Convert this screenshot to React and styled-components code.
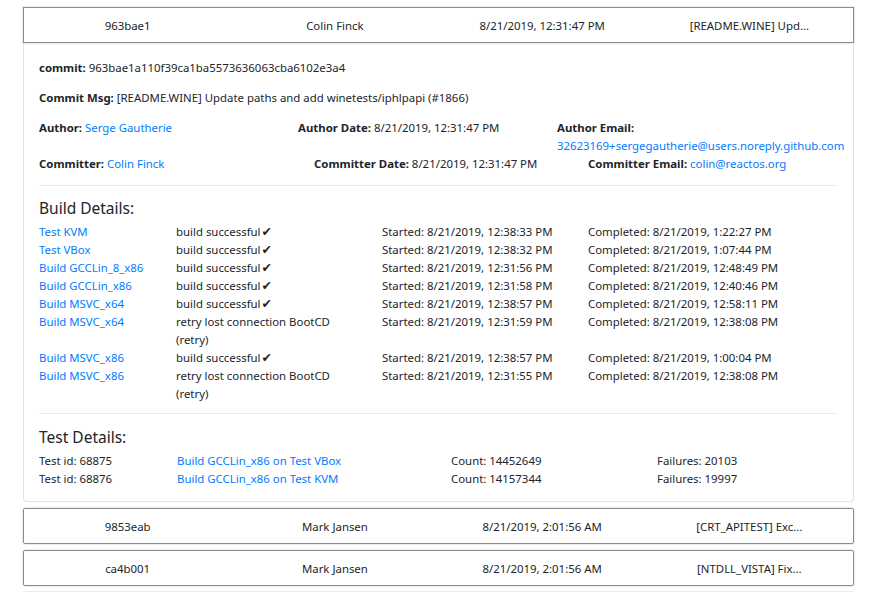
import React from "react";
import styled, { createGlobalStyle } from "styled-components";

const Global = createGlobalStyle`
  html, body { margin: 0; padding: 0; background: #fff; }
  body {
    font-family: "Noto Sans", "Open Sans", sans-serif;
    font-size: 11.4px;
    line-height: 18px;
    color: #212529;
  }
`;

const Page = styled.div`
  padding: 7px 23px 0 23px;
  display: flex;
  flex-direction: column;
`;

const CommitRow = styled.div`
  display: grid;
  grid-template-columns: repeat(4, 1fr);
  align-items: center;
  height: 34px;
  flex-shrink: 0;
  border: 1px solid #8c8c8c;
  box-shadow: 0 0 1px 1px rgba(0, 0, 0, 0.08);
  margin-top: ${(p) => (p.$first ? "0" : "6px")};
  border-radius: ${(p) => (p.$open ? "0" : "2px")};
`;

const Cell = styled.div`
  text-align: center;
  white-space: nowrap;
  padding-top: 1px;
`;

const Panel = styled.div`
  border: 1px solid #e2e2e2;
  border-top: none;
  border-radius: 0 0 4px 4px;
  padding: 16px 15px 13px 15px;
`;

const Line = styled.p`
  margin: 0 0 12px 0;
`;

const Label = styled.b`
  font-weight: 700;
`;

const Link = styled.a`
  color: #007bff;
  text-decoration: none;
`;

const InfoRow = styled.div`
  display: grid;
  grid-template-columns: ${(p) => p.$cols};
`;

const Divider = styled.hr`
  border: none;
  border-top: 1px solid #e9ecef;
  margin: ${(p) => p.$m || "12px 0 12px 0"};
`;

const Heading = styled.h5`
  margin: 0 0 5px 0;
  font-size: 15.5px;
  font-weight: 400;
  line-height: 20px;
`;

const Table = styled.div`
  display: grid;
  grid-template-columns: ${(p) => p.$cols};
  column-gap: 0;
`;

const TCell = styled.div`
  padding-right: 28px;
`;

const Check = styled.span`
  font-family: "DejaVu Sans", sans-serif;
  font-size: 12.5px;
  line-height: 0;
  color: #222;
  margin-left: 1px;
`;

const builds = [
  ["Test KVM", null, "12:38:33 PM", "1:22:27 PM"],
  ["Test VBox", null, "12:38:32 PM", "1:07:44 PM"],
  ["Build GCCLin_8_x86", null, "12:31:56 PM", "12:48:49 PM"],
  ["Build GCCLin_x86", null, "12:31:58 PM", "12:40:46 PM"],
  ["Build MSVC_x64", null, "12:38:57 PM", "12:58:11 PM"],
  ["Build MSVC_x64", "retry", "12:31:59 PM", "12:38:08 PM"],
  ["Build MSVC_x86", null, "12:38:57 PM", "1:00:04 PM"],
  ["Build MSVC_x86", "retry", "12:31:55 PM", "12:38:08 PM"],
];

const tests = [
  ["68875", "Build GCCLin_x86 on Test VBox", "14452649", "20103"],
  ["68876", "Build GCCLin_x86 on Test KVM", "14157344", "19997"],
];

const others = [
  ["9853eab", "Mark Jansen", "8/21/2019, 2:01:56 AM", "[CRT_APITEST] Exc..."],
  ["ca4b001", "Mark Jansen", "8/21/2019, 2:01:56 AM", "[NTDLL_VISTA] Fix..."],
  ["", "", "", ""],
];

export default function App() {
  return (
    <>
      <Global />
      <Page>
        <CommitRow $first $open>
          <Cell>963bae1</Cell>
          <Cell>Colin Finck</Cell>
          <Cell>8/21/2019, 12:31:47 PM</Cell>
          <Cell>[README.WINE] Upd...</Cell>
        </CommitRow>
        <Panel>
          <Line>
            <Label>commit:</Label> 963bae1a110f39ca1ba5573636063cba6102e3a4
          </Line>
          <Line>
            <Label>Commit Msg:</Label> [README.WINE] Update paths and add winetests/iphlpapi (#1866)
          </Line>
          <InfoRow $cols="259px 259px 1fr">
            <div>
              <Label>Author:</Label> <Link href="#">Serge Gautherie</Link>
            </div>
            <div>
              <Label>Author Date:</Label> 8/21/2019, 12:31:47 PM
            </div>
            <div>
              <Label>Author Email:</Label>{" "}
              <Link href="#">32623169+sergegautherie@users.noreply.github.com</Link>
            </div>
          </InfoRow>
          <InfoRow $cols="275px 274px 1fr">
            <div>
              <Label>Committer:</Label> <Link href="#">Colin Finck</Link>
            </div>
            <div>
              <Label>Committer Date:</Label> 8/21/2019, 12:31:47 PM
            </div>
            <div>
              <Label>Committer Email:</Label> <Link href="#">colin@reactos.org</Link>
            </div>
          </InfoRow>
          <Divider />
          <Heading>Build Details:</Heading>
          <Table $cols="137px 206px 206px 1fr">
            {builds.map((b, i) => (
              <React.Fragment key={i}>
                <TCell>
                  <Link href="#">{b[0]}</Link>
                </TCell>
                <TCell>
                  {b[1] ? (
                    "retry lost connection BootCD (retry)"
                  ) : (
                    <>
                      build successful<Check>✔</Check>
                    </>
                  )}
                </TCell>
                <TCell>Started: 8/21/2019, {b[2]}</TCell>
                <TCell>Completed: 8/21/2019, {b[3]}</TCell>
              </React.Fragment>
            ))}
          </Table>
          <Divider $m="10px 0 13px 0" />
          <Heading>Test Details:</Heading>
          <Table $cols="138px 274px 206px 1fr">
            {tests.map((t, i) => (
              <React.Fragment key={i}>
                <TCell>Test id: {t[0]}</TCell>
                <TCell>
                  <Link href="#">{t[1]}</Link>
                </TCell>
                <TCell>Count: {t[2]}</TCell>
                <TCell>Failures: {t[3]}</TCell>
              </React.Fragment>
            ))}
          </Table>
        </Panel>
        {others.map((o, i) => (
          <CommitRow key={i}>
            <Cell>{o[0]}</Cell>
            <Cell>{o[1]}</Cell>
            <Cell>{o[2]}</Cell>
            <Cell>{o[3]}</Cell>
          </CommitRow>
        ))}
      </Page>
    </>
  );
}
